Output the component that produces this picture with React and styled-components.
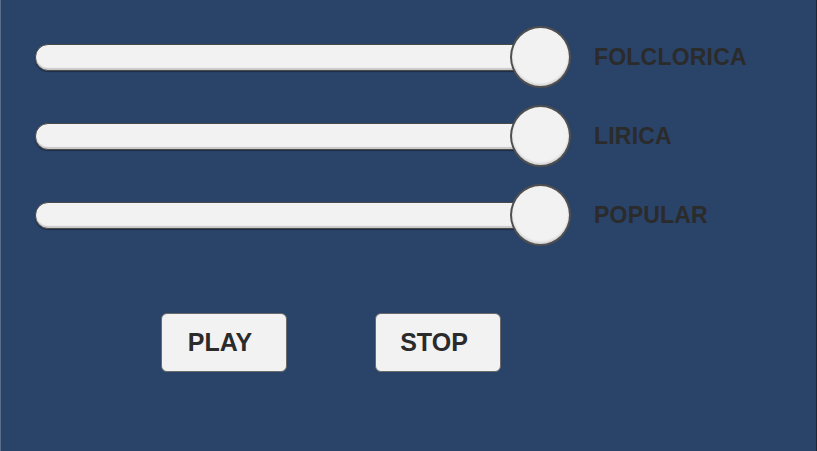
import React, { useState } from "react";
import styled, { createGlobalStyle } from "styled-components";

const GlobalStyle = createGlobalStyle`
  html, body {
    margin: 0;
    padding: 0;
    background: #2a4369;
  }
`;

const Screen = styled.div`
  box-sizing: border-box;
  width: 100vw;
  height: 100vh;
  background: #2a4369;
  border-left: 1px solid #5a6d8d;
  border-right: 1px solid #1c2738;
  font-family: "Liberation Sans", Arial, sans-serif;
  padding: 26px 0 0 34px;
  overflow: hidden;
`;

const Mixer = styled.div`
  display: flex;
  flex-direction: column;
  gap: 17px;
`;

const Row = styled.div`
  display: flex;
  align-items: center;
  gap: 23px;
  height: 62px;
`;

const SliderBox = styled.div`
  position: relative;
  display: flex;
  align-items: center;
  width: 536px;
  height: 62px;
`;

const Track = styled.div`
  flex: 1;
  margin-right: 30px;
  height: 25px;
  border-radius: 13px;
  background: #f2f2f2;
  border: 1px solid #4a4a4a;
  box-shadow: inset 0 -2px 1px #c9c9c9, 0 1px 1px rgba(0, 0, 0, 0.35);
`;

const Knob = styled.div`
  position: absolute;
  top: 0;
  right: 0;
  box-sizing: border-box;
  width: 61px;
  height: 62px;
  border-radius: 50%;
  background: #f2f2f2;
  border: 2px solid #505050;
  box-shadow: inset 0 -2px 2px #d6d6d6;
`;

const Label = styled.span`
  font-size: 23px;
  font-weight: bold;
  color: #2b2b2b;
  letter-spacing: 0.2px;
`;

const Controls = styled.div`
  display: flex;
  gap: 88px;
  margin: 67px 0 0 126px;
`;

const Button = styled.button`
  box-sizing: border-box;
  width: 126px;
  height: 59px;
  background: #f2f2f2;
  border: 1px solid #6a6a6a;
  border-radius: 6px;
  font-family: "Liberation Sans", Arial, sans-serif;
  font-size: 25px;
  font-weight: bold;
  color: #2b2b2b;
  padding: 0 8px 0 0;
  cursor: pointer;
`;

const channels = ["FOLCLORICA", "LIRICA", "POPULAR"];

export default function App() {
  const [playing, setPlaying] = useState(false);

  return (
    <>
      <GlobalStyle />
      <Screen>
        <Mixer>
          {channels.map((name) => (
            <Row key={name}>
              <SliderBox>
                <Track />
                <Knob />
              </SliderBox>
              <Label>{name}</Label>
            </Row>
          ))}
        </Mixer>
        <Controls>
          <Button onClick={() => setPlaying(true)}>PLAY</Button>
          <Button onClick={() => setPlaying(false)}>STOP</Button>
        </Controls>
      </Screen>
    </>
  );
}
